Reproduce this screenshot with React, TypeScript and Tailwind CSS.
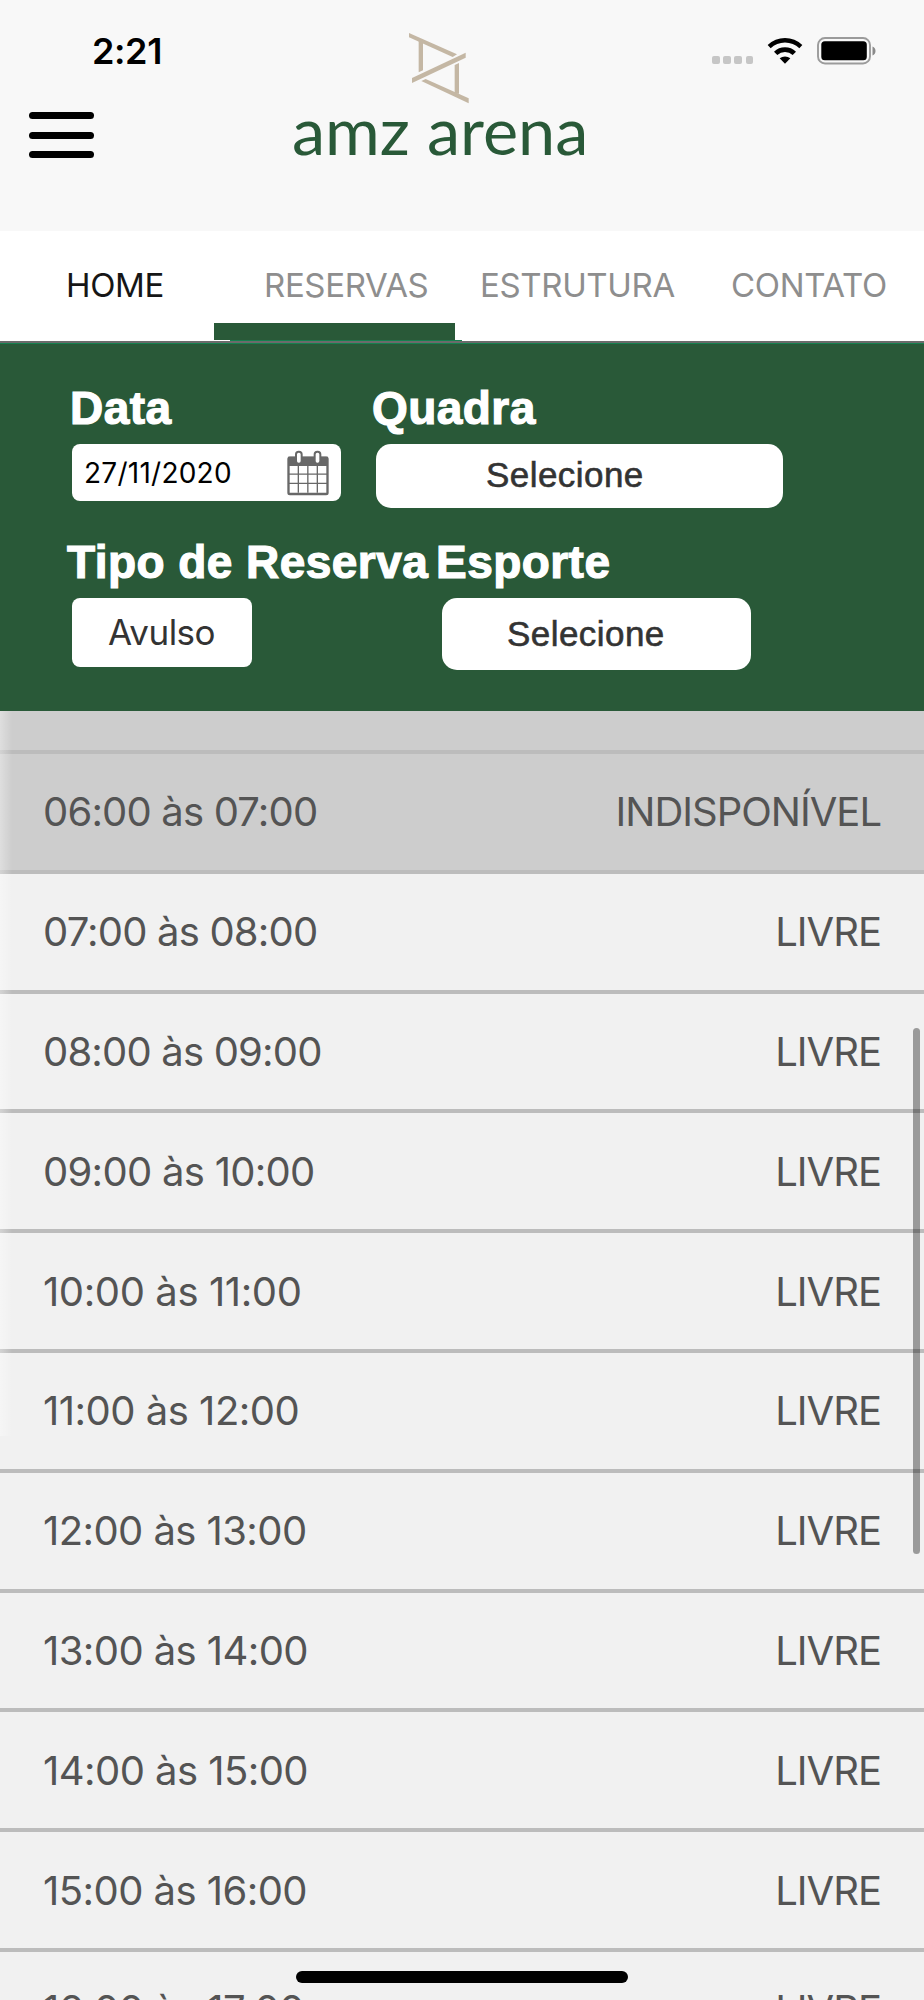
import clsx from "clsx";

type Slot = {
  hour: string;
  available: boolean;
  tracking: string;
};

const tabs = [
  { label: "HOME", className: "ml-[66px] w-[198px] text-[#161616]" },
  { label: "RESERVAS", className: "w-[216px] text-[#8e8e8e]" },
  { label: "ESTRUTURA", className: "w-[251px] text-[#8e8e8e]" },
  { label: "CONTATO", className: "text-[#8e8e8e]" },
];

const slots: Slot[] = [
  { hour: "06:00 às 07:00", available: false, tracking: "tracking-[-0.82px]" },
  { hour: "07:00 às 08:00", available: true, tracking: "tracking-[-0.82px]" },
  { hour: "08:00 às 09:00", available: true, tracking: "tracking-[-0.82px]" },
  { hour: "09:00 às 10:00", available: true, tracking: "tracking-[-0.72px]" },
  { hour: "10:00 às 11:00", available: true, tracking: "tracking-[-0.4px]" },
  { hour: "11:00 às 12:00", available: true, tracking: "tracking-[-0.5px]" },
  { hour: "12:00 às 13:00", available: true, tracking: "tracking-[-0.58px]" },
  { hour: "13:00 às 14:00", available: true, tracking: "tracking-[-0.58px]" },
  { hour: "14:00 às 15:00", available: true, tracking: "tracking-[-0.55px]" },
  { hour: "15:00 às 16:00", available: true, tracking: "tracking-[-0.55px]" },
  { hour: "16:00 às 17:00", available: true, tracking: "tracking-[-0.55px]" },
];

function LogoMark() {
  return (
    <svg width="60" height="71" viewBox="88 38 180 213" fill="#c4b7a4">
      <path d="M88 38 232 102 219 110 88 51Z" />
      <path d="M117 62h13v88l-13 6Z" />
      <path d="M258 97v15L97 188v-15Z" />
      <path d="M225 134l13-6v92h-13Z" />
      <path d="M125 182l13-6 129 58v15Z" />
    </svg>
  );
}

function WifiIcon() {
  return (
    <svg width="36" height="28" viewBox="0 0 108 84">
      <path d="M2 24A74 74 0 0 1 106 24L97 34A61 61 0 0 0 11 34Z" />
      <path d="M21 44A48 48 0 0 1 87 44L77 54A34 34 0 0 0 31 54Z" />
      <path d="M38 64A25 25 0 0 1 70 64L54 80Z" />
    </svg>
  );
}

function BatteryIcon() {
  return (
    <svg width="60" height="28" viewBox="0 0 60 28">
      <rect x="1" y="1" width="52" height="25.5" rx="7" fill="none" stroke="#9b9b9b" strokeWidth="1.9" />
      <rect x="4.300" y="4.200" width="45.500" height="19" rx="3.500" />
      <path d="M55.500 9.500c4 1.500 4 7.500 0 9Z" fill="#8a8a8a" />
    </svg>
  );
}

function CalendarIcon() {
  return (
    <svg width="42" height="46" viewBox="0 0 126 138">
      <rect x="4.500" y="23" width="117" height="109" rx="4" fill="#fff" stroke="#686868" strokeWidth="7" />
      <path d="M3 20h120v28H3Z" fill="#686868" />
      <path d="M34 48v80M62.500 48v80M91 48v80M6 72.500h114M6 100h114" stroke="#686868" strokeWidth="4" />
      <rect x="27" y="5" width="17" height="36" rx="8" fill="#fff" stroke="#686868" strokeWidth="6" />
      <rect x="83" y="5" width="17" height="36" rx="8" fill="#fff" stroke="#686868" strokeWidth="6" />
    </svg>
  );
}

function Header() {
  return (
    <header className="flex h-[231px] items-start bg-[#f8f8f8]">
      <div className="w-[293px] shrink-0">
        <div className="mt-[31px] ml-[92px] text-[36px] leading-[40px] font-semibold tracking-[-0.4px] text-black">2:21</div>
        <button className="mt-[41px] ml-[29px] flex flex-col gap-[12.500px]">
          <span className="h-[7px] w-[65px] rounded-full bg-black" />
          <span className="h-[7px] w-[65px] rounded-full bg-black" />
          <span className="h-[7px] w-[65px] rounded-full bg-black" />
        </button>
      </div>
      <div className="w-[419px] shrink-0 pt-[33px]">
        <div className="ml-[116px]">
          <LogoMark />
        </div>
        <div className="-mt-[13px] -ml-[1px] origin-left scale-x-104 font-[Lato,sans-serif] text-[64px] leading-[80px] whitespace-nowrap text-[#295938]">
          amz arena
        </div>
      </div>
      <div className="mt-[37px] flex">
        <div className="mt-[19px] flex gap-[3.700px]">
          <span className="size-[7.500px] rounded-[2px] bg-[#c6c6c6]" />
          <span className="size-[7.500px] rounded-[2px] bg-[#c6c6c6]" />
          <span className="size-[7.500px] rounded-[2px] bg-[#c6c6c6]" />
          <span className="size-[7.500px] rounded-[2px] bg-[#c6c6c6]" />
        </div>
        <div className="ml-[14px]">
          <WifiIcon />
        </div>
        <div className="ml-[14px]">
          <BatteryIcon />
        </div>
      </div>
    </header>
  );
}

function Tabs() {
  return (
    <nav className="flex h-[110px] flex-col bg-white">
      <div className="flex h-[92px] pt-[34px]">
        {tabs.map((tab) => (
          <a key={tab.label} className={clsx("shrink-0 text-[33px] leading-[40px] tracking-[-0.35px]", tab.className)}>
            {tab.label}
          </a>
        ))}
      </div>
      <div className="ml-[214px] h-[17px] w-[241px] bg-[#295938]" />
      <div className="ml-[230px] h-px w-[232px] bg-[#15804f]" />
    </nav>
  );
}

function FilterForm() {
  const label =
    "block text-[46px] leading-[52px] font-bold tracking-[0.45px] whitespace-nowrap text-white [-webkit-text-stroke:1.2px_white]";
  const select = "flex items-center rounded-[15px] bg-white text-[35px] tracking-[0.45px] text-[#333] [-webkit-text-stroke:0.6px_#333]";

  return (
    <section className="h-[370px] border-t-2 border-[#6b6b6b] bg-[#295938] font-['Liberation_Sans',sans-serif] shadow-[inset_0_1px_0_#15804f]">
      <div className="flex pt-[39px]">
        <div className="ml-[70px] w-[302px]">
          <span className={label}>Data</span>
          <div className="mt-[9.500px] ml-[2px] flex h-[57px] w-[269px] items-center justify-between rounded-[8px] bg-white pt-[2px] pr-[12px] pl-[12px]">
            <span className="font-[Inter,sans-serif] text-[28px] tracking-[0.25px] text-black">27/11/2020</span>
            <CalendarIcon />
          </div>
        </div>
        <div>
          <span className={label}>Quadra</span>
          <button className={clsx("mt-[9.500px] ml-[4px] h-[64px] w-[407px] pl-[110px]", select)}>Selecione</button>
        </div>
      </div>
      <div className="mt-[28.500px] flex">
        <div className="ml-[67px] w-[369px]">
          <span className={label}>Tipo de Reserva</span>
          <button className="mt-[9.500px] ml-[5px] flex h-[69px] w-[180px] items-center rounded-[8px] bg-white pt-px pl-[36px] font-[Inter,sans-serif] text-[35px] tracking-[-0.5px] text-[#333]">
            Avulso
          </button>
        </div>
        <div>
          <span className={label}>Esporte</span>
          <button className={clsx("mt-[10px] ml-[6px] h-[72px] w-[309px] pl-[65px]", select)}>Selecione</button>
        </div>
      </div>
    </section>
  );
}

function SlotRow({ slot }: { slot: Slot }) {
  return (
    <li
      className={clsx(
        "flex h-[119.8px] shrink-0 items-center justify-between border-b-4 border-[#bcbcbc] pt-px pr-[43px] pl-[43px] text-[40px] text-[#545454]",
        slot.available ? "bg-[#f1f1f1]" : "bg-[#cdcdcd]"
      )}
    >
      <span className={slot.tracking}>{slot.hour}</span>
      <span className="tracking-[-1px]">{slot.available ? "LIVRE" : "INDISPONÍVEL"}</span>
    </li>
  );
}

export default function App() {
  return (
    <div className="relative flex h-[2000px] w-[924px] flex-col overflow-hidden font-[Inter,sans-serif]">
      <Header />
      <Tabs />
      <FilterForm />
      <ul className="flex flex-1 flex-col overflow-hidden">
        <li className="h-[43px] shrink-0 border-b-4 border-[#bcbcbc] bg-[#cdcdcd]" />
        {slots.map((slot) => (
          <SlotRow key={slot.hour} slot={slot} />
        ))}
      </ul>

      {/* swipe edge, scroll thumb and home indicator float over the list */}
      <div className="absolute top-[711px] left-0 h-[725px] w-[12px] bg-linear-to-r from-white/35 to-transparent" />
      <div className="absolute top-[1028px] right-[4px] h-[526px] w-[7px] rounded-full bg-black/36" />
      <div className="absolute top-[1971px] left-[296px] h-[12px] w-[332px] rounded-full bg-black" />
    </div>
  );
}
